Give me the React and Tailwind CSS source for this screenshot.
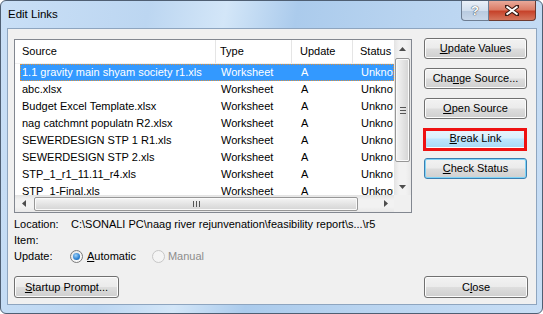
import React from 'react';

const links = [
    '1.1 gravity main shyam society r1.xls',
    'abc.xlsx',
    'Budget Excel Template.xlsx',
    'nag catchmnt populatn R2.xlsx',
    'SEWERDESIGN STP 1 R1.xls',
    'SEWERDESIGN STP 2.xls',
    'STP_1_r1_11.11_r4.xls',
    'STP_1-Final.xls'
];

const btnBase = 'flex items-center justify-center rounded-[3px] border text-black';
const btnNormal = 'border-[#707070] bg-[linear-gradient(to_bottom,#f2f2f2_0%,#ebebeb_48%,#dddddd_52%,#cfcfcf_100%)] shadow-[inset_0_0_0_1px_#fcfcfc]';
const btnHover = 'border-[#3c7fb1] bg-[linear-gradient(to_bottom,#eaf6fd_0%,#d9f0fc_48%,#bee6fd_52%,#a7d9f5_100%)] shadow-[inset_0_0_0_1px_#fcfcfc]';
const btnFocus = 'border-[#3c7fb1] bg-[linear-gradient(to_bottom,#f2f2f2_0%,#ebebeb_48%,#dddddd_52%,#cfcfcf_100%)] shadow-[inset_0_0_0_1px_#7ed4f7]';

const Arrow = ({ dir }) => {
    const d = {
        up: 'M3.5 0 L7 4 L0 4 Z',
        down: 'M0 0 L7 0 L3.5 4 Z',
        left: 'M4 0 L4 7 L0 3.5 Z',
        right: 'M0 0 L4 3.5 L0 7 Z'
    }[dir];
    const vert = dir === 'up' || dir === 'down';
    return (
        <svg width={vert ? 7 : 4} height={vert ? 4 : 7}>
            <path d={d} fill="#4d4d4d" />
        </svg>
    );
};

export default function App() {
    return (
        <div className="w-[543px] h-[314px] bg-white font-['Liberation_Sans',Arial,sans-serif] text-[11px] text-black">
            <div className="w-full h-full flex flex-col rounded-[6px] border border-[#4f5f73] bg-[linear-gradient(100deg,#c9dff6_0%,#bcd6f1_25%,#d3e6f8_38%,#abcbec_50%,#b9d4f0_70%,#c8def5_100%)] overflow-hidden">

                {/* Title bar */}
                <div className="h-[27px] flex items-start">
                    <div className="pl-[7px] pt-[8px] text-[11.5px] text-black leading-none">Edit Links</div>
                    <div className="ml-auto mr-[6px] flex">
                        <div className="w-[28px] h-[20px] flex items-center justify-center rounded-bl-[4px] border border-t-0 border-[#6d7d92] bg-[linear-gradient(to_bottom,#e9f0f8_0%,#d2dfee_50%,#b9cbe0_55%,#c8d8ea_100%)] text-white font-bold text-[13px] [text-shadow:0_0_1px_#2f3b4c,0_0_1px_#2f3b4c]">?</div>
                        <div className="w-[47px] h-[20px] flex items-center justify-center rounded-br-[4px] border border-l-0 border-t-0 border-[#6d3a30] bg-[linear-gradient(to_bottom,#e9a99a_0%,#dc7d67_45%,#c7432b_55%,#d5765d_100%)]">
                            <svg width="14" height="11" viewBox="0 0 14 11">
                                <path d="M1 1 L13 10 M13 1 L1 10" stroke="#3a1a14" strokeWidth="4" strokeLinecap="square" />
                                <path d="M1.5 1.5 L12.5 9.5 M12.5 1.5 L1.5 9.5" stroke="#ffffff" strokeWidth="2" />
                            </svg>
                        </div>
                    </div>
                </div>

                {/* Client area */}
                <div className="flex-1 ml-[6px] mr-[5px] mb-[8px] border border-[#8ea5bf] bg-[#f0f0f0] flex flex-col pt-[9px] pl-[6px] pr-[8px]">
                    <div className="flex items-start gap-[12px]">

                        {/* Links list */}
                        <div className="mt-[1px] w-[398px] h-[174px] border border-[#828790] bg-white flex overflow-hidden">
                            <div className="w-[379px] flex flex-col">
                                <div className="h-[24px] flex items-stretch border-b border-[#f0f0f0] whitespace-nowrap">
                                    <div className="w-[201px] pl-[7px] flex items-center border-r border-[#e5e5e5]">Source</div>
                                    <div className="w-[76px] pl-[4px] flex items-center border-r border-[#e5e5e5]">Type</div>
                                    <div className="w-[61px] pl-[8px] flex items-center border-r border-[#e5e5e5]">Update</div>
                                    <div className="flex-1 pl-[7px] flex items-center overflow-hidden">Status</div>
                                </div>
                                <div className="flex-1 overflow-hidden">
                                    {links.map((name, i) => (
                                        <div
                                            key={name}
                                            className={i === 0
                                                ? 'ml-[5px] h-[17px] flex items-center whitespace-nowrap bg-[#3399ff] text-white border border-dotted border-[#e0913a]'
                                                : 'ml-[5px] h-[17px] flex items-center whitespace-nowrap border border-transparent'}
                                        >
                                            <div className="w-[196px] pl-[1px]">{name}</div>
                                            <div className="w-[76px] pl-[4px]">Worksheet</div>
                                            <div className="w-[61px] pl-[8px]">A</div>
                                            <div className="flex-1 pl-[7px] overflow-hidden">Unknown</div>
                                        </div>
                                    ))}
                                </div>
                                {/* Horizontal scrollbar */}
                                <div className="h-[17px] flex items-center bg-[linear-gradient(to_bottom,#e3e3e3,#f2f2f2_30%,#f2f2f2_70%,#e8e8e8)]">
                                    <div className="w-[17px] h-[17px] flex items-center justify-center"><Arrow dir="left" /></div>
                                    <div className="ml-[2px] w-[324px] h-[14px] rounded-[2px] border border-[#979797] bg-[linear-gradient(to_bottom,#f5f5f5_0%,#e4e4e4_50%,#d4d4d4_100%)] shadow-[inset_0_0_0_1px_#fafafa] flex items-center justify-center gap-[2px]">
                                        <div className="w-[1px] h-[6px] bg-[#555]" />
                                        <div className="w-[1px] h-[6px] bg-[#555]" />
                                        <div className="w-[1px] h-[6px] bg-[#555]" />
                                    </div>
                                    <div className="flex-1" />
                                    <div className="w-[17px] h-[17px] flex items-center justify-center"><Arrow dir="right" /></div>
                                </div>
                            </div>

                            {/* Vertical scrollbar */}
                            <div className="w-[17px] flex flex-col">
                                <div className="flex-1 flex flex-col items-center bg-[linear-gradient(to_right,#e3e3e3,#f2f2f2_30%,#f2f2f2_70%,#e8e8e8)]">
                                    <div className="w-[17px] h-[17px] flex items-center justify-center"><Arrow dir="up" /></div>
                                    <div className="mt-[1px] w-[15px] h-[104px] rounded-[2px] border border-[#979797] bg-[linear-gradient(to_right,#f5f5f5_0%,#e4e4e4_50%,#d4d4d4_100%)] shadow-[inset_0_0_0_1px_#fafafa] flex flex-col items-center justify-center gap-[2px]">
                                        <div className="w-[6px] h-[1px] bg-[#555]" />
                                        <div className="w-[6px] h-[1px] bg-[#555]" />
                                        <div className="w-[6px] h-[1px] bg-[#555]" />
                                    </div>
                                    <div className="flex-1" />
                                    <div className="w-[17px] h-[17px] flex items-center justify-center"><Arrow dir="down" /></div>
                                </div>
                                <div className="h-[17px] bg-[#f0f0f0]" />
                            </div>
                        </div>

                        {/* Action buttons */}
                        <div className="w-[103px] flex flex-col gap-[9px]">
                            <div className={`h-[21px] ${btnBase} ${btnNormal}`}><span><span className="underline">U</span>pdate Values</span></div>
                            <div className={`h-[21px] ${btnBase} ${btnNormal}`}><span>Cha<span className="underline">n</span>ge Source...</span></div>
                            <div className={`h-[21px] ${btnBase} ${btnNormal}`}><span><span className="underline">O</span>pen Source</span></div>
                            <div className="relative">
                                <div className={`h-[21px] ${btnBase} ${btnHover}`}><span><span className="underline">B</span>reak Link</span></div>
                                <div className="absolute left-[-1px] right-0 top-0 bottom-[-2px] border-[3px] border-[#ee1111]" />
                            </div>
                            <div className={`h-[21px] ${btnBase} ${btnFocus}`}><span><span className="underline">C</span>heck Status</span></div>
                        </div>
                    </div>

                    {/* Link details */}
                    <div className="mt-[3px] flex flex-col">
                        <div className="h-[16px] flex items-center">
                            <div className="w-[57px] pl-[0px]">Location:</div>
                            <div>{'C:\\SONALI PC\\naag river rejunvenation\\feasibility report\\s...\\r5'}</div>
                        </div>
                        <div className="h-[16px] flex items-center">
                            <div className="w-[57px]">Item:</div>
                        </div>
                        <div className="h-[17px] flex items-center">
                            <div className="w-[56px]">Update:</div>
                            <div className="flex items-center gap-[4px]">
                                <div className="w-[13px] h-[13px] rounded-full border border-[#7b7b7b] bg-[linear-gradient(135deg,#e4e4e4,#ffffff)] flex items-center justify-center">
                                    <div className="w-[7px] h-[7px] rounded-full bg-[radial-gradient(circle_at_40%_35%,#9fd2f8,#2a7fd0_60%,#1a5c9e)]" />
                                </div>
                                <span><span className="underline">A</span>utomatic</span>
                            </div>
                            <div className="ml-[16px] flex items-center gap-[3px] text-[#8d8d8d]">
                                <div className="w-[13px] h-[13px] rounded-full border border-[#c6c6c6] bg-[#f4f4f4]" />
                                <span>Manual</span>
                            </div>
                        </div>
                    </div>

                    {/* Bottom buttons */}
                    <div className="mt-[11px] flex justify-between">
                        <div className={`w-[105px] h-[22px] ${btnBase} ${btnNormal}`}><span><span className="underline">S</span>tartup Prompt...</span></div>
                        <div className={`w-[104px] h-[22px] ${btnBase} ${btnNormal}`}><span>C<span className="underline">l</span>ose</span></div>
                    </div>
                </div>
            </div>
        </div>
    );
}
